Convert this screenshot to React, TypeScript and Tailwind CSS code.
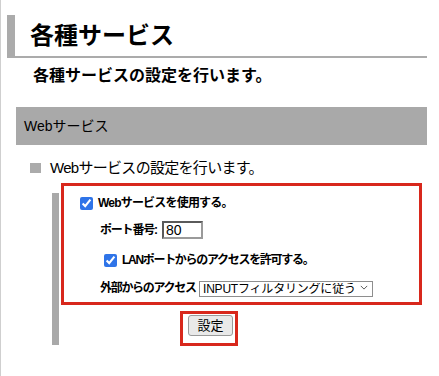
import React from 'react';

const font = { fontFamily: '"Liberation Sans", "Noto Sans CJK JP", sans-serif' };

const App: React.FC = () => {
  return (
    <div
      className="relative w-[439px] h-[376px] overflow-hidden bg-white border-l border-[#cfcfcf] text-black"
      style={font}
    >
      {/* page title */}
      <div className="ml-[6px] pt-[15px]">
        <div className="w-[420px] h-[43px] border-l-[8px] border-b-2 border-[#ababab] flex items-center pl-[15px] text-[24px] font-bold leading-none">
          各種サービス
        </div>
      </div>
      <p className="ml-[32px] mt-[6px] h-[24px] flex items-center text-[16px] font-bold">
        各種サービスの設定を行います。
      </p>

      {/* section header */}
      <div className="ml-[15px] mt-[19px] w-[411px] h-[38px] bg-[#a9a9a9] flex items-center pl-[8px] text-[14px]">
        Webサービス
      </div>

      <div className="ml-[29px] mt-[11px] h-[24px] flex items-center">
        <span className="w-[11px] h-[10px] bg-[#ababab]" />
        <span className="ml-[9px] text-[15px] tracking-[-0.7px]">Webサービスの設定を行います。</span>
      </div>

      {/* settings */}
      <div className="ml-[51px] mt-[13px] h-[152px] border-l-[7px] border-[#a9a9a9] text-[12px] font-bold whitespace-nowrap">
        <label className="mt-[2px] h-[20px] ml-[21px] flex items-center gap-[5px]">
          <input type="checkbox" defaultChecked className="w-[13px] h-[13px] m-0 shrink-0 accent-[#2f74e8]" />
          <span className="tracking-[-0.8px]">Webサービスを使用する。</span>
        </label>

        <div className="mt-[8px] h-[18px] ml-[41px] flex items-center">
          <span className="w-[62px] shrink-0 tracking-[-1.2px]">ポート番号:</span>
          <input
            type="text"
            defaultValue="80"
            className="w-[41px] h-[18px] shrink-0 border-2 border-[#5a5a5a] border-b-[#9a9a9a] border-r-[#9a9a9a] px-[2px] text-[14px] font-normal outline-none"
            style={font}
          />
        </div>

        <label className="mt-[11px] h-[20px] ml-[45px] flex items-center gap-[5px]">
          <input type="checkbox" defaultChecked className="w-[13px] h-[13px] m-0 shrink-0 accent-[#2f74e8]" />
          <span className="tracking-[-1.3px]">LANポートからのアクセスを許可する。</span>
        </label>

        <div className="mt-[10px] h-[16px] ml-[41px] flex items-center">
          <span className="w-[99px] shrink-0 tracking-[-1.3px]">外部からのアクセス</span>
          <div className="relative w-[174px] h-[16px] shrink-0">
            <select
              defaultValue="input"
              className="appearance-none w-full h-full border border-[#8e8e8e] bg-white pl-[3px] text-[12px] font-normal leading-none tracking-[-0.2px] outline-none"
              style={font}
            >
              <option value="input">INPUTフィルタリングに従う</option>
            </select>
            <svg
              viewBox="0 0 10 6"
              className="absolute right-[5px] top-[5px] w-[8px] h-[5px] pointer-events-none"
              fill="none"
              stroke="#555"
              strokeWidth="1.2"
            >
              <path d="M1 1l4 4 4-4" />
            </svg>
          </div>
        </div>

        <button
          type="button"
          className="mt-[19px] ml-[129px] w-[45px] h-[21px] border border-[#9a9a9a] rounded-[3px] bg-[#e9e9e9] text-[13px] font-normal flex items-center justify-center"
          style={font}
        >
          設定
        </button>
      </div>

      {/* highlight frames */}
      <div className="absolute left-[60px] top-[183px] w-[361px] h-[122px] border-[3px] border-[#d8281c] pointer-events-none" />
      <div className="absolute left-[179px] top-[311px] w-[58px] h-[35px] border-[3px] border-[#d8281c] pointer-events-none" />
    </div>
  );
};

export default App;
